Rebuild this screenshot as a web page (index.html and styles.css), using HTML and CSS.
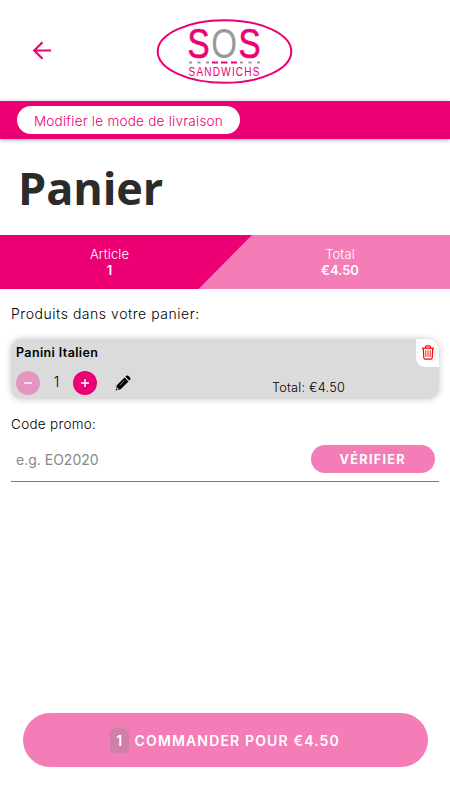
FILE: index.html
```html
<!DOCTYPE html>
<html lang="fr">
<head>
<meta charset="utf-8">
<meta name="viewport" content="width=device-width, initial-scale=1">
<title>Panier</title>
<link rel="stylesheet" href="styles.css">
</head>
<body>
<header class="header">
  <button class="back" aria-label="Retour">
    <svg width="20" height="20" viewBox="0 0 20 20" fill="none" stroke="#ec0073" stroke-width="2.200"><path d="M20 9.500H3M11.500 1.300 3.200 9.500l8.300 8.300"/></svg>
  </button>
  <svg class="logo" width="140" height="70" viewBox="0 0 140 70">
    <ellipse cx="69.500" cy="34.500" rx="66.800" ry="31.300" fill="none" stroke="#ec0073" stroke-width="2"/>
    <g class="logo-big">
      <text transform="translate(32.500 41.200) scale(.79 1)" class="pink">S</text>
      <text transform="translate(56.200 41.200) scale(.79 1)" class="gray">O</text>
      <text transform="translate(83.500 41.200) scale(.79 1)" class="pink">S</text>
    </g>
    <path d="M34 45.500h3M42.500 45.500h3M51 45.500h3M85 45.500h3M93.500 45.500h3M102 45.500h3" stroke="#999" stroke-width="2"/>
    <path d="M57 45.500h6M66 45.500h6.500M76 45.500h6" stroke="#ec0073" stroke-width="2"/>
    <text transform="translate(33.500 58.500) scale(.84 1)" class="logo-small pink">SANDWICHS</text>
  </svg>
</header>
<nav class="delivery"><button class="delivery-btn">Modifier le mode de livraison</button></nav>
<main>
  <h1 class="title">Panier</h1>
  <section class="summary">
    <div class="cell cell-articles"><span>Article</span><b>1</b></div>
    <div class="cell cell-total"><span>Total</span><b>€4.50</b></div>
  </section>
  <section class="cart">
    <h2 class="label">Produits dans votre panier:</h2>
    <article class="item">
      <h3 class="item-name">Panini Italien</h3>
      <div class="item-row">
        <button class="qty qty-minus" aria-label="Moins"><svg width="10" height="10" viewBox="0 0 10 10"><path d="M1 5h8" stroke="#fff" stroke-width="1.300"/></svg></button>
        <span class="count">1</span>
        <button class="qty" aria-label="Plus"><svg width="10" height="10" viewBox="0 0 10 10"><path d="M1 5h8M5 1v8" stroke="#fff" stroke-width="1.500"/></svg></button>
        <svg class="edit" width="16" height="16" viewBox="0 0 16 16"><path d="M1.800 10.300 9.600 2.500l3.900 3.900-7.800 7.800-5.100 1.300zM10.400 1.700l.9-.9q1-.8 2 0l1.900 1.900q.8 1 0 2l-.9.900z"/><path d="m4.800 10.300 4.700-4.700" stroke="#dbdbdb" stroke-width=".6"/><path d="m1.700 12.100 2.200 2.200-1.500.4-1.100-1.100z" fill="#dbdbdb"/></svg>
        <span class="item-total">Total: €4.50</span>
      </div>
      <button class="remove" aria-label="Supprimer">
        <svg width="14" height="15" viewBox="0 0 14 15" fill="none" stroke="#f00"><path d="M1 3.200h12" stroke-width="1.200"/><path d="M4.500 3V1.800q0-.9 1-.9h3q1 0 1 .9V3M2.300 3.500l.5 9.300q.1 1.300 1.300 1.300h5.800q1.200 0 1.300-1.300l.5-9.300" stroke-width="1.200"/><path d="m4.700 5.300.2 6.600M7 5.300v6.600m2.300-6.600-.2 6.600" stroke-width=".9"/></svg>
      </button>
    </article>
    <h2 class="label promo-label">Code promo:</h2>
    <form class="promo">
      <input class="promo-input" type="text" placeholder="e.g. EO2020">
      <button class="verify" type="button">VÉRIFIER</button>
    </form>
  </section>
</main>
<footer class="footer">
  <button class="order"><span class="badge">1</span><span class="order-text">COMMANDER POUR €4.50</span></button>
</footer>
</body>
</html>
```
FILE: styles.css
```css
* { box-sizing: border-box; }
body {
  margin: 0;
  height: 800px;
  display: flex;
  flex-direction: column;
  overflow: hidden;
  background: #fff;
  color: #000;
  font-family: Inter, "Liberation Sans", sans-serif;
}
button { border: 0; padding: 0; font-family: inherit; }
h1, h2, h3 { margin: 0; }
.header {
  height: 101px;
  flex: none;
  display: grid;
  grid-template-columns: 123px 1fr;
  column-gap: 32px;
  align-items: center;
}
.back { display: flex; margin-left: 31px; background: none; width: 20px; }
.logo { display: block; margin-top: 2px; }
.logo-big { font: 42px "Liberation Sans", sans-serif; }
.logo-big .pink { stroke: #ec0073; stroke-width: .7px; }
.logo-small { font: 12px "Liberation Sans", sans-serif; letter-spacing: 1.4px; }
.pink { fill: #ec0073; }
.gray { fill: #999; }
.delivery {
  height: 38px;
  flex: none;
  padding: 5px 17px;
  background: #ec0073;
  box-shadow: 0 1px 4px rgba(0, 0, 0, .35);
}
.delivery-btn {
  display: block;
  width: 223px;
  height: 28px;
  padding-top: 1px;
  border-radius: 14px;
  background: #fff;
  color: #ec0073;
  font-size: 13.5px;
  font-weight: 350;
  letter-spacing: .25px;
}
.title {
  height: 96px;
  padding: 17px 0 0 18px;
  font: 700 45px/64px "Open Sans", sans-serif;
  letter-spacing: -.1px;
  color: #2b2b2b;
}
.summary {
  height: 54.4px;
  display: grid;
  grid-template-columns: 219px 1fr;
  background: #f47db8;
}
.cell {
  display: flex;
  flex-direction: column;
  align-items: center;
  padding-top: 12px;
  font-size: 13px;
  line-height: 15.5px;
  color: #fff;
}
.cell-articles {
  width: 252px;
  padding-right: 33px;
  background: #ec0073;
  clip-path: polygon(0 0, 252px 0, 198px 100%, 0 100%);
}
.cell-total { padding-left: 11px; }
.cell span { font-weight: 300; letter-spacing: .1px; }
.cell b { font-weight: 600; }
.cart { padding: 15px 11px 0; }
.label { font-size: 14px; line-height: 20px; font-weight: 350; letter-spacing: .54px; }
.item {
  position: relative;
  height: 60px;
  margin-top: 14.6px;
  padding: 5px;
  border-radius: 11px;
  background: #dbdbdb;
  box-shadow: 0 0 7px rgba(0, 0, 0, .22);
}
.item-name { font-size: 12.5px; line-height: 17px; font-weight: 600; letter-spacing: .38px; }
.item-row { display: flex; align-items: center; height: 24px; margin-top: 10px; }
.qty {
  width: 24px;
  height: 24px;
  display: grid;
  place-items: center;
  border-radius: 50%;
  background: #ec0073;
}
.qty-minus { background: #e496c0; }
.count { width: 33px; text-align: center; font-size: 14px; font-weight: 350; margin-top: -3px; }
.edit { margin-left: 18px; }
.item-total { margin: 9px 0 0 141px; font-size: 12.7px; font-weight: 350; letter-spacing: .22px; }
.remove {
  position: absolute;
  top: 0;
  right: 0;
  width: 23px;
  height: 28px;
  display: grid;
  place-items: center;
  background: #fff;
  border-radius: 0 11px 0 9px;
}
.promo-label { margin-top: 15px; font-size: 13.5px; letter-spacing: .3px; }
.promo {
  height: 48px;
  display: flex;
  align-items: center;
  justify-content: space-between;
  padding: 2px 4px 0 5px;
  border-bottom: 1px solid #ec3d96;
}
.promo-input {
  width: 240px;
  border: 0;
  padding: 2px 0 0;
  outline: 0;
  background: none;
  font: 14px Inter, sans-serif;
}
.promo-input::placeholder { color: #888; opacity: 1; }
.verify {
  width: 124.5px;
  height: 28px;
  margin-top: 2px;
  padding-top: 1px;
  border-radius: 14px;
  background: #f47db8;
  color: #fff;
  font-size: 12.7px;
  font-weight: 700;
  letter-spacing: 1.3px;
}
.footer { margin-top: auto; padding: 0 22.5px 33px; }
.order {
  width: 100%;
  height: 54px;
  display: flex;
  align-items: center;
  justify-content: center;
  gap: 6px;
  border-radius: 27px;
  background: #f47db8;
  color: #fff;
  font-size: 14px;
  font-weight: 600;
  letter-spacing: 1.15px;
}
.badge {
  width: 18.5px;
  height: 25px;
  display: grid;
  place-items: center;
  border-radius: 5px;
  background: #cf80a9;
  letter-spacing: 0;
}
```
